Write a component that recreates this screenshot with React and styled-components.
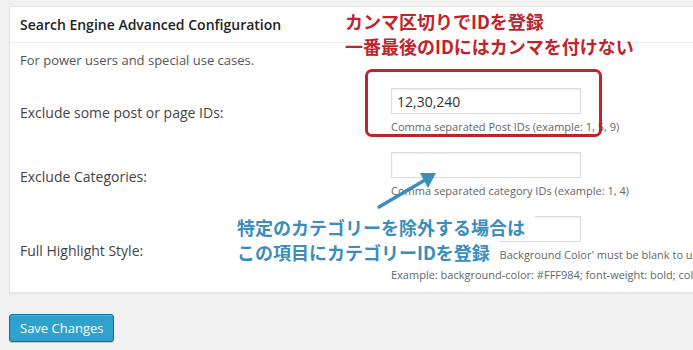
import React from "react";
import styled, { createGlobalStyle } from "styled-components";

const GlobalStyle = createGlobalStyle`
  html, body {
    margin: 0;
    padding: 0;
    background: #f1f1f1;
    overflow: hidden;
    font-family: "Open Sans", "Noto Sans CJK JP", sans-serif;
    color: #444;
  }
`;

const Page = styled.div`
  position: relative;
  width: 693px;
  height: 350px;
  padding: 6px 0 0 9px;
  box-sizing: border-box;
`;

const Panel = styled.div`
  background: #fff;
  border: 1px solid #e5e5e5;
  border-right: none;
  box-shadow: 0 1px 1px rgba(0, 0, 0, 0.04);
  margin-right: -20px;
`;

const PanelHeader = styled.h3`
  margin: 0;
  height: 35px;
  padding: 0 10px;
  display: flex;
  align-items: center;
  font-size: 14px;
  font-weight: 600;
  color: #222;
  border-bottom: 1px solid #eee;
`;

const PanelBody = styled.div`
  padding: 7px 10px 9px;
`;

const Intro = styled.p`
  margin: 0 0 18px;
  font-size: 13px;
  line-height: 20px;
  color: #555;
`;

const Rows = styled.div`
  display: flex;
  flex-direction: column;
  gap: 17px;
`;

const Row = styled.div`
  display: grid;
  grid-template-columns: 371px 1fr;
  align-items: center;
`;

const Label = styled.div`
  font-size: 14px;
  color: #444;
  padding-top: ${(p) => p.$offset || 0}px;
`;

const Field = styled.div`
  display: flex;
  flex-direction: column;
  white-space: nowrap;
`;

const TextInput = styled.input`
  box-sizing: border-box;
  width: 190px;
  height: 26px;
  padding: 0 5px;
  border: 1px solid #ddd;
  box-shadow: inset 0 1px 2px rgba(0, 0, 0, 0.07);
  font-family: "Open Sans", sans-serif;
  font-size: 14px;
  color: #333;
  outline: none;
`;

const Hint = styled.p`
  margin: ${(p) => p.$top || 5}px 0 0;
  font-size: 11px;
  line-height: 16px;
  color: #666;
`;

const SaveButton = styled.button`
  margin-top: 21px;
  height: 28px;
  padding: 0 10px 1px;
  background: #2ea2cc;
  border: 1px solid #0074a2;
  border-radius: 3px;
  box-shadow: inset 0 1px 0 rgba(120, 200, 230, 0.5), 0 1px 0 rgba(0, 0, 0, 0.15);
  color: #fff;
  font-family: "Open Sans", sans-serif;
  font-size: 13px;
`;

const Note = styled.div`
  position: absolute;
  left: ${(p) => p.$x}px;
  top: ${(p) => p.$y}px;
  font-family: "Noto Sans CJK JP", sans-serif;
  font-weight: 700;
  font-size: 18px;
  line-height: 25px;
  color: ${(p) => p.$color};
  white-space: nowrap;
`;

const NoteLine = styled.span`
  display: block;
  width: fit-content;
  background: ${(p) => (p.$boxed ? "#fff" : "transparent")};
  padding-right: ${(p) => (p.$boxed ? 10 : 0)}px;
  margin-left: ${(p) => (p.$boxed ? -7 : 0)}px;
  padding-left: ${(p) => (p.$boxed ? 7 : 0)}px;
`;

const Highlight = styled.div`
  position: absolute;
  left: 365px;
  top: 69px;
  width: 237px;
  height: 68px;
  box-sizing: border-box;
  border: 3px solid #c1232b;
  border-radius: 7px;
`;

const Arrow = styled.svg`
  position: absolute;
  left: 370px;
  top: 165px;
`;

const RED = "#c1232b";
const BLUE = "#3a8dbd";

export default function App() {
  return (
    <>
      <GlobalStyle />
      <Page>
        <Panel>
          <PanelHeader>Search Engine Advanced Configuration</PanelHeader>
          <PanelBody>
            <Intro>For power users and special use cases.</Intro>
            <Rows>
              <Row>
                <Label $offset={1}>Exclude some post or page IDs:</Label>
                <Field>
                  <TextInput defaultValue="12,30,240" />
                  <Hint>Comma separated Post IDs (example: 1, 5, 9)</Hint>
                </Field>
              </Row>
              <Row>
                <Label $offset={1}>Exclude Categories:</Label>
                <Field>
                  <TextInput />
                  <Hint>Comma separated category IDs (example: 1, 4)</Hint>
                </Field>
              </Row>
              <Row>
                <Label $offset={1}>Full Highlight Style:</Label>
                <Field>
                  <TextInput />
                  <Hint>Important: 'Highlight Background Color' must be blank to use this style.</Hint>
                  <Hint $top={4}>Example: background-color: #FFF984; font-weight: bold; color: #000; padding: 0 1px;</Hint>
                </Field>
              </Row>
            </Rows>
          </PanelBody>
        </Panel>
        <SaveButton>Save Changes</SaveButton>

        <Highlight />
        <Note $x={345} $y={9} $color={RED}>
          <NoteLine>カンマ区切りでIDを登録</NoteLine>
          <NoteLine>一番最後のIDにはカンマを付けない</NoteLine>
        </Note>

        <Arrow width="80" height="50" viewBox="0 0 80 50">
          <line x1="9" y1="42" x2="55" y2="15" stroke={BLUE} strokeWidth="3.5" strokeLinecap="round" />
          <polygon points="66,8 50,8 58,23" fill={BLUE} />
        </Arrow>
        <Note $x={237} $y={215} $color={BLUE}>
          <NoteLine $boxed>特定のカテゴリーを除外する場合は</NoteLine>
          <NoteLine $boxed>この項目にカテゴリーIDを登録</NoteLine>
        </Note>
      </Page>
    </>
  );
}
